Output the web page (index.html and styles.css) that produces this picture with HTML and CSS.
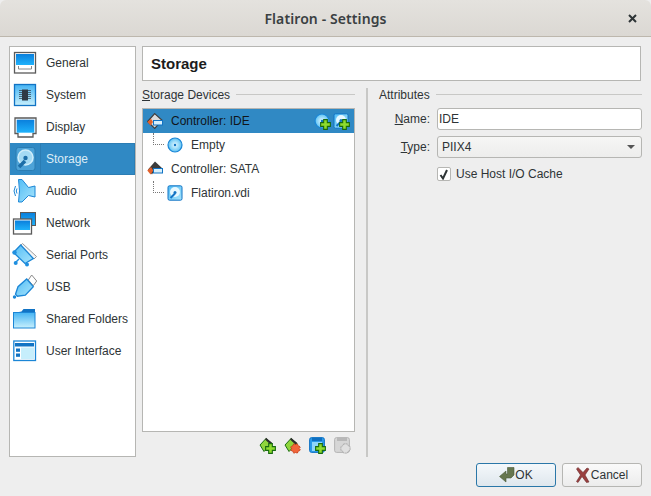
FILE: index.html
```html
<!DOCTYPE html>
<html lang="en">
<head>
<meta charset="utf-8">
<title>Flatiron - Settings</title>
<link rel="stylesheet" href="styles.css">
</head>
<body>
<svg class="defs" width="0" height="0" aria-hidden="true">
  <defs>
    <linearGradient id="blue" x1="0" y1="0" x2="0" y2="1"><stop offset="0" stop-color="#0a7fdc"/><stop offset="1" stop-color="#1fb2fb"/></linearGradient>
    <linearGradient id="pale" x1="0" y1="0" x2="0" y2="1"><stop offset="0" stop-color="#45b4f4"/><stop offset="1" stop-color="#c8f0fc"/></linearGradient>
    <linearGradient id="soft" x1="0" y1="0" x2="1" y2="1"><stop offset="0" stop-color="#52bdf6"/><stop offset="1" stop-color="#a8e4fb"/></linearGradient>
    <radialGradient id="disc"><stop offset="0" stop-color="#e6f9ff"/><stop offset="1" stop-color="#5cc2f3"/></radialGradient>
    <symbol id="plus" viewBox="0 0 12 12"><path d="M4 .7h4v3.300h3.300v4H8v3.300H4V8H.7V4H4z" fill="#8fdc2e" stroke="#176a10" stroke-width="1.200"/></symbol>
    <symbol id="cross" viewBox="0 0 12 12"><path d="M4 1h1l1 1 1-1h1l1 2 2 1v1l-1 1 1 1v1l-2 1-1 2H7l-1-1-1 1H4L3 9 1 8V7l1-1-1-1V4l2-1z" fill="#f2653a" stroke="#c23c18" stroke-dasharray="2 .4"/></symbol>
    <symbol id="ctl-open" viewBox="0 0 16 16"><path d="M7.700.6l7.400 6.600-7.400 8.200L.6 8.500z" fill="#dcdcdc" stroke="#3c3c3c" stroke-width="1.200"/><path d="M.3 9l3.700-3.300 2 3.300-2.500 3.500z" fill="#e2602a"/><rect x="6.500" y="7.500" width="9" height="4.500" fill="#d8f0fc" stroke="#1173c4"/></symbol>
    <symbol id="ctl-dark" viewBox="0 0 16 16"><path d="M8 .5l7 6.500H9l-4 6.500-4-5z" fill="#3b3b3b"/><path d="M.3 9.500l3.700-3.500 2.300 3.500-2.800 4z" fill="#e2602a"/><rect x="6.500" y="7.500" width="9" height="4.500" fill="#d8f0fc" stroke="#1173c4"/></symbol>
    <symbol id="disk" viewBox="0 0 16 16"><rect x="1" y=".8" width="14" height="14.400" rx="1.500" fill="url(#soft)" stroke="#1173c4"/><circle cx="8" cy="7" r="5" fill="#e6f8ff"/><circle cx="8" cy="7.400" r="1.500" fill="#1173c4"/><path d="M3.500 13l4.500-4.500" stroke="#1173c4" stroke-width="2"/></symbol>
    <symbol id="cd" viewBox="0 0 16 16"><circle cx="8" cy="8" r="7" fill="url(#disc)" stroke="#1b86d6" stroke-width="1.200"/><circle cx="8" cy="8" r="1.200" fill="#1173c4"/></symbol>
    <symbol id="tag" viewBox="0 0 16 16"><path d="M7 1.500l6 5-8 8-4-6.500z" fill="#8fd63c" stroke="#1c6e12"/><path d="M7 .8l6.500 5.400-1.800 1.600L6 2.600z" fill="#2d2d2d"/></symbol>
  </defs>
</svg>
<div class="window">
  <header class="titlebar">
    <h1 class="title">Flatiron - Settings</h1>
    <svg class="close" width="9" height="9" viewBox="0 0 9 9"><path d="M1 1l7 7M8 1L1 8" stroke="#2e3436" stroke-width="2"/></svg>
  </header>
  <div class="body">
    <div class="main">
      <nav class="side">
        <div class="nav-item">
          <svg class="nav-icon" viewBox="0 0 26 26"><rect x="2.500" y="2.500" width="21" height="20.500" fill="#fff" stroke="#5a5a5a" stroke-width="1.300"/><rect x="4" y="4" width="18" height="11" fill="url(#blue)"/><path d="M6.500 16v3h13v-3" fill="none" stroke="#888"/></svg>
          <span class="nav-label">General</span>
        </div>
        <div class="nav-item">
          <svg class="nav-icon" viewBox="0 0 26 26"><rect x="2.500" y="2.500" width="21" height="21" fill="url(#pale)" stroke="#1173c4" stroke-width="1.300"/><rect x="10" y="7.500" width="6" height="11" fill="#2f3a46"/><path d="M7 8.500h12M7 10.500h12M7 12.500h12M7 14.500h12M7 16.500h12" stroke="#2f3a46" stroke-width=".7"/></svg>
          <span class="nav-label">System</span>
        </div>
        <div class="nav-item">
          <svg class="nav-icon" viewBox="0 0 26 26"><path d="M3 4h21v15.500h-3v3.500H6v-3.500H3z" fill="#fff" stroke="#5a5a5a" stroke-width="1.300"/><rect x="4.700" y="5.700" width="17.600" height="13" fill="url(#blue)"/></svg>
          <span class="nav-label">Display</span>
        </div>
        <div class="nav-item nav-current">
          <svg class="nav-icon" viewBox="0 0 26 26"><rect x="4" y="1.500" width="19" height="23" rx="2.500" fill="#4da3d8" stroke="#2a7cb2"/><circle cx="13.500" cy="11.500" r="7.500" fill="#a4daf4" stroke="#d0eefb" stroke-width="1.500"/><circle cx="13.500" cy="12" r="2.200" fill="#1c6ea8"/><path d="M7 21l6-6" stroke="#1c6ea8" stroke-width="3.500"/></svg>
          <span class="nav-label">Storage</span>
        </div>
        <div class="nav-item">
          <svg class="nav-icon" viewBox="0 0 26 26"><path d="M6.500 1.500h3.500l6.500 8 6.500-1.500v11l-6.500-1.500-6.500 6.500H6.500q2-11 0-22.500z" fill="url(#soft)" stroke="#1b86d6"/><path d="M3.500 8q-3 5 0 10M5 10.500q-1.500 2.500 0 5" fill="none" stroke="#1b86d6"/></svg>
          <span class="nav-label">Audio</span>
        </div>
        <div class="nav-item">
          <svg class="nav-icon" viewBox="0 0 26 26"><rect x="8.500" y="2.500" width="15" height="13" fill="url(#blue)" stroke="#5a5a5a"/><rect x="1.500" y="9" width="18" height="15" fill="#fff" stroke="#5a5a5a" stroke-width="1.300"/><rect x="3" y="10.500" width="15" height="9.500" fill="url(#blue)"/></svg>
          <span class="nav-label">Network</span>
        </div>
        <div class="nav-item">
          <svg class="nav-icon" viewBox="0 0 26 26"><path d="M10.500 1.500l14 13-2.500 2.500-14-13z" fill="#f6f6f6" stroke="#9a9a9a"/><path d="M8.700 3l12.600 13.500-8.300 5L1.500 10.500z" fill="url(#soft)" stroke="#1b86d6" stroke-width="1.300"/><circle cx="2.500" cy="10.500" r="2.200" fill="#1f8fe0"/><circle cx="3.700" cy="21" r="2" fill="#1f8fe0"/><circle cx="15" cy="22.500" r="2" fill="#1f8fe0"/><path d="M3.500 20.500L7 17" stroke="#1f8fe0" stroke-width="1.500"/></svg>
          <span class="nav-label">Serial Ports</span>
        </div>
        <div class="nav-item">
          <svg class="nav-icon" viewBox="0 0 26 26"><path d="M16.300 6l3.400-5 5 6-3.400 4.700z" fill="#fff" stroke="#8a8a8a"/><path d="M14.700 5l6.600 7.700-8 8.500-8 1-1.800-2 2.500-7.500z" fill="url(#soft)" stroke="#1b86d6" stroke-width="1.300"/><circle cx="2.500" cy="23" r="1.700" fill="#1b86d6"/></svg>
          <span class="nav-label">USB</span>
        </div>
        <div class="nav-item">
          <svg class="nav-icon" viewBox="0 0 26 26"><path d="M1.500 7l8-1.500 2-2.500h11.500v4z" fill="#1173c4"/><rect x="1.500" y="6.500" width="21.500" height="15.500" fill="url(#pale)" stroke="#1b86d6"/></svg>
          <span class="nav-label">Shared Folders</span>
        </div>
        <div class="nav-item">
          <svg class="nav-icon" viewBox="0 0 26 26"><rect x="1.800" y="3" width="21.700" height="19.500" fill="#fff" stroke="#1b86d6" stroke-width="1.300"/><rect x="3" y="5" width="19" height="3.500" fill="#1173c4"/><rect x="9" y="9.500" width="13" height="11.500" fill="#c6eefc"/><rect x="4" y="10.500" width="4" height="3.300" fill="#1173c4"/><rect x="4" y="15.500" width="4" height="3.300" fill="#1173c4"/></svg>
          <span class="nav-label">User Interface</span>
        </div>
      </nav>
      <section class="content">
        <h2 class="page-title">Storage</h2>
        <div class="panes">
          <div class="left-pane">
            <div class="group-head"><span><u>S</u>torage Devices</span><i class="rule"></i></div>
            <div class="tree">
              <div class="row row-selected">
                <svg class="row-icon" width="16" height="16"><use href="#ctl-open"/></svg>
                <span class="row-text">Controller: IDE</span>
                <span class="row-tools">
                  <span class="combo"><svg width="16" height="16"><use href="#cd"/></svg><svg class="combo-plus" width="11" height="11"><use href="#plus"/></svg></span>
                  <span class="combo"><svg width="16" height="16"><use href="#disk"/></svg><svg class="combo-plus" width="11" height="11"><use href="#plus"/></svg></span>
                </span>
              </div>
              <div class="row row-child">
                <i class="branch"></i>
                <svg width="16" height="16"><use href="#cd"/></svg>
                <span class="row-text">Empty</span>
              </div>
              <div class="row">
                <svg class="row-icon" width="16" height="16"><use href="#ctl-dark"/></svg>
                <span class="row-text">Controller: SATA</span>
              </div>
              <div class="row row-child">
                <i class="branch"></i>
                <svg width="16" height="16"><use href="#disk"/></svg>
                <span class="row-text">Flatiron.vdi</span>
              </div>
            </div>
            <div class="tree-tools">
              <span class="combo"><svg width="16" height="16"><use href="#tag"/></svg><svg class="combo-plus" width="11" height="11"><use href="#plus"/></svg></span>
              <span class="combo"><svg width="16" height="16"><use href="#tag"/></svg><svg class="combo-plus" width="11" height="11"><use href="#cross"/></svg></span>
              <span class="combo"><svg width="16" height="16" viewBox="0 0 16 16"><rect x=".6" y=".6" width="14.800" height="14.800" rx="2" fill="#2a9ae8" stroke="#1173c4"/><rect x="3" y="1" width="10" height="3" fill="#0f6fc0"/><rect x="3" y="5" width="10" height="9" fill="#8ed6fa"/></svg><svg class="combo-plus" width="11" height="11"><use href="#plus"/></svg></span>
              <span class="combo"><svg width="16" height="16" viewBox="0 0 16 16"><rect x=".6" y=".6" width="14.800" height="14.800" rx="2" fill="#d6d6d6" stroke="#b4b4b4"/><rect x="3" y="1" width="10" height="3" fill="#b8b8b8"/></svg><svg class="combo-plus" width="11" height="11" viewBox="0 0 12 12"><path d="M4 1h4l1 2 2 1v4l-2 1-1 2H4L3 9 1 8V4l2-1z" fill="#e0e0e0" stroke="#aaa" stroke-dasharray="2 .5"/></svg></span>
            </div>
          </div>
          <div class="right-pane">
            <div class="group-head"><span>Attributes</span><i class="rule"></i></div>
            <div class="form">
              <label class="form-label"><u>N</u>ame:</label>
              <div class="field">IDE</div>
              <label class="form-label"><u>T</u>ype:</label>
              <div class="field field-select"><span>PIIX4</span><i class="caret"></i></div>
              <span></span>
              <div class="check-row">
                <span class="check"><svg width="10" height="11" viewBox="0 0 10 11"><path d="M1.500 6l2.500 3.500L8 1" fill="none" stroke="#2e3436" stroke-width="2"/></svg></span>
                <span>Use Host I/O Cache</span>
              </div>
            </div>
          </div>
        </div>
      </section>
    </div>
    <footer class="actions">
      <button class="btn btn-default" type="button"><svg width="16" height="16" viewBox="0 0 16 16"><path d="M8.500.5H15V8l-3 3H7v4L.5 9.500 7 4v3h1.500z" fill="#66764e" stroke="#4b5a3a" stroke-width=".6"/></svg>OK</button>
      <button class="btn btn-cancel" type="button"><svg width="14" height="16" viewBox="0 0 14 16"><path d="M2 .5l5 5 4-4.500 2 1-4 6 4 7-2.500 .5L6 9.500 2 15.500l-1.500-1L4.500 8 .5 2z" fill="#9a4040" stroke="#6a2a2a" stroke-width=".6"/></svg>Cancel</button>
    </footer>
  </div>
</div>
</body>
</html>
```

FILE: styles.css
```css
* { box-sizing: border-box; }
html, body { margin: 0; padding: 0; }
body {
  width: 651px;
  height: 496px;
  overflow: hidden;
  background: #eeeeee;
  font-family: "Liberation Sans", Arial, sans-serif;
  font-size: 12px;
  color: #2e3436;
}
.defs { position: absolute; }
.window { display: flex; flex-direction: column; height: 496px; }
.titlebar {
  flex: 0 0 37px;
  display: flex;
  align-items: center;
  justify-content: center;
  position: relative;
  background: linear-gradient(#e4e2de, #dbd8d3);
  border-bottom: 1px solid #bdb7ad;
  border-radius: 6px 6px 0 0;
}
.title { margin: 0; font-family: "Noto Sans", sans-serif; font-size: 14px; font-weight: 600; letter-spacing: .1px; color: #3a4042; }
.close { position: absolute; right: 14px; top: 14px; }
.body { flex: 1; display: flex; flex-direction: column; padding: 9px; min-height: 0; }
.main { flex: 1; display: flex; gap: 6px; min-height: 0; }
.side {
  width: 127px;
  background: #fff;
  border: 1px solid #b6b6b3;
  height: 411px;
}
.nav-item { height: 32px; display: flex; align-items: center; color: #2e3436; padding-left: 2px; }
.nav-icon { width: 26px; height: 26px; flex: none; }
.nav-label { flex: 1; align-self: stretch; display: flex; align-items: center; margin-left: 2px; padding-left: 6px; }
.nav-current { background: #3089c4; color: #dcecf6; }
.nav-current .nav-label { border: 1px solid #2b7db4; padding-left: 5px; }
.content { flex: 1; display: flex; flex-direction: column; min-width: 0; }
.page-title {
  margin: 0 1px 0 0;
  height: 35px;
  line-height: 33px;
  padding-left: 8px;
  background: #fff;
  border: 1px solid #b6b6b3;
  font-size: 15px;
  font-weight: 700;
  color: #1c1c1c;
}
.panes { flex: 1; display: flex; padding-top: 7px; min-height: 0; }
.left-pane { width: 213px; display: flex; flex-direction: column; }
.group-head { display: flex; gap: 6px; height: 15px; line-height: 15px; }
.rule { flex: 1; height: 1px; margin-top: 6px; background: #c8c8c6; }
.tree {
  margin-top: 5px;
  height: 324px;
  background: #fff;
  border: 1px solid #b6b6b3;
}
.row { height: 24px; display: flex; align-items: center; padding-left: 4px; gap: 8px; position: relative; }
.row-selected { background: #3089c4; color: #10151a; }
.row-tools { margin-left: auto; display: flex; gap: 3px; padding-right: 5px; }
.row-child { padding-left: 24px; }
.branch {
  position: absolute;
  left: 10px;
  top: 0;
  width: 11px;
  height: 12px;
  border-left: 1px dotted #777;
  border-bottom: 1px dotted #777;
}
.combo { position: relative; display: inline-block; width: 16px; height: 16px; }
.combo svg { display: block; }
.combo-plus { position: absolute; right: -1px; bottom: -1px; }
.tree-tools { display: flex; justify-content: flex-end; gap: 9px; padding: 5px 5px 0 0; }
.right-pane {
  flex: 1;
  margin-left: 11px;
  border-left: 2px solid #c8c8c6;
  padding-left: 11px;
  height: 369px;
}
.form {
  margin-top: 5px;
  display: grid;
  grid-template-columns: 51px 1fr;
  column-gap: 7px;
  row-gap: 6px;
  align-items: center;
}
.form-label { text-align: right; }
.field {
  height: 22px;
  line-height: 20px;
  padding-left: 1px;
  background: #fff;
  border: 1px solid #b6b6b3;
  border-radius: 3px;
}
.field-select {
  display: flex;
  align-items: center;
  justify-content: space-between;
  padding: 0 6px 0 4px;
  background: linear-gradient(#f6f6f5, #ededec);
}
.caret { width: 0; height: 0; border: 4.500px solid transparent; border-top: 4px solid #555; border-bottom: 0; }
.check-row { display: flex; align-items: center; gap: 5px; height: 20px; }
.check {
  width: 14px;
  height: 14px;
  display: flex;
  align-items: center;
  justify-content: center;
  background: #fff;
  border: 1px solid #b6b6b3;
  border-radius: 2px;
}
.actions { display: flex; justify-content: flex-end; gap: 6px; flex: none; }
.btn {
  width: 80px;
  height: 24px;
  display: flex;
  align-items: center;
  justify-content: center;
  padding: 0;
  background: linear-gradient(#fafafa, #ececec);
  border: 1px solid #b6b6b3;
  border-radius: 3px;
  font: 12px "Liberation Sans", Arial, sans-serif;
  color: #2e3436;
}
.btn-cancel { gap: 1px; }
.btn-default { border-color: #2a77a8; background: linear-gradient(#f4f8fb, #dfe7ed); }
```
